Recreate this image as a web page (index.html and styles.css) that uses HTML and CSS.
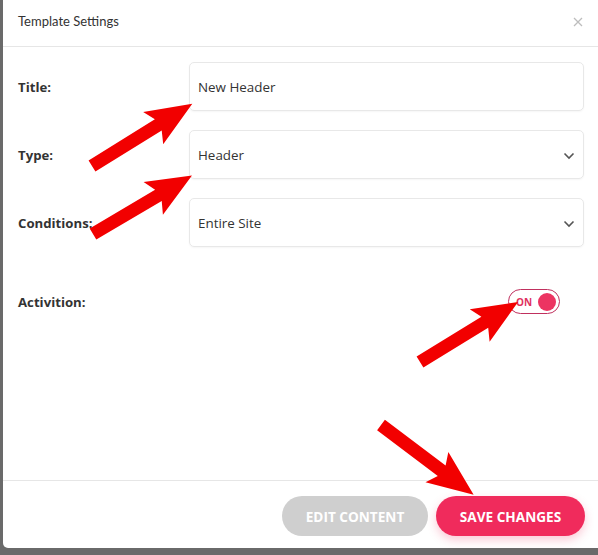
FILE: index.html
```html
<!DOCTYPE html>
<html>
<head>
<meta charset="utf-8">
<link rel="stylesheet" href="styles.css">
</head>
<body>
<div class="modal">
  <div class="modal-header">
    <span class="modal-title">Template Settings</span>
    <svg class="close" width="10" height="10" viewBox="0 0 10 10"><path d="M1 1L9 9M9 1L1 9" stroke="#bdbdbd" stroke-width="1.3" fill="none"/></svg>
  </div>
  <div class="modal-body">
    <div class="row">
      <label class="label">Title:</label>
      <div class="field">New Header</div>
    </div>
    <div class="row">
      <label class="label">Type:</label>
      <div class="field">Header
        <svg class="chev" width="12" height="8" viewBox="0 0 12 8"><path d="M1.5 1.5L6 6L10.5 1.5" stroke="#555" stroke-width="1.6" fill="none"/></svg>
      </div>
    </div>
    <div class="row">
      <label class="label">Conditions:</label>
      <div class="field">Entire Site
        <svg class="chev" width="12" height="8" viewBox="0 0 12 8"><path d="M1.5 1.5L6 6L10.5 1.5" stroke="#555" stroke-width="1.6" fill="none"/></svg>
      </div>
    </div>
    <div class="row toggle-row">
      <label class="label">Activition:</label>
      <div class="toggle"><span class="toggle-text">ON</span><span class="knob"></span></div>
    </div>
  </div>
  <div class="modal-footer">
    <button class="btn btn-grey">EDIT CONTENT</button>
    <button class="btn btn-red">SAVE CHANGES</button>
  </div>
  <svg class="arrows" width="598" height="555" viewBox="0 0 598 555">
    <g fill="#f20000">
      <polygon transform="translate(92,166) rotate(-31.8)" points="0,-6.5 78,-6.5 72,-19 118,0 72,19 78,6.5 0,6.5"/>
      <polygon transform="translate(93,234) rotate(-30.6)" points="0,-6.5 76,-6.5 70,-19 115,0 70,19 76,6.5 0,6.5"/>
      <polygon transform="translate(420,362) rotate(-31.5)" points="0,-6.5 76,-6.5 70,-19 115,0 70,19 76,6.5 0,6.5"/>
      <polygon transform="translate(381,425) rotate(37)" points="0,-6.5 76,-6.5 70,-19 116,0 70,19 76,6.5 0,6.5"/>
    </g>
  </svg>
</div>
</body>
</html>
```

FILE: styles.css
```css
html, body {
  margin: 0;
  padding: 0;
}
body {
  background: #6a6a6a;
  width: 598px;
  height: 555px;
  overflow: hidden;
  font-family: "Open Sans", "Noto Sans", sans-serif;
  color: #333;
}
.modal {
  position: relative;
  margin-left: 3px;
  width: 595px;
  height: 548px;
  background: #fff;
  border-bottom-left-radius: 5px;
}
.modal-header {
  border-bottom: 1px solid #e6e6e6;
  display: flex;
  align-items: center;
  justify-content: space-between;
  padding: 0 15px 0 15px;
  box-sizing: border-box;
  height: 47px;
}
.modal-title {
  font-family: "Lato", "Open Sans", sans-serif;
  font-size: 13px;
  color: #333;
  margin-top: -4px;
}
.close {
  margin-top: -3px;
}
.modal-body {
  padding: 15px 14px 0 15px;
  height: 434px;
  box-sizing: border-box;
  border-bottom: 1px solid #e6e6e6;
}
.row {
  display: flex;
  align-items: center;
  margin-bottom: 19px;
}
.label {
  width: 171px;
  font-size: 13.2px;
  font-weight: 700;
  color: #333;
}
.field {
  position: relative;
  flex: 0 0 395px;
  height: 49px;
  box-sizing: border-box;
  border: 1px solid #e8e8e8;
  border-radius: 5px;
  box-shadow: 0 1px 2px rgba(0,0,0,0.04);
  display: flex;
  align-items: center;
  padding-left: 8px;
  font-size: 13.4px;
  color: #333;
}
.chev {
  position: absolute;
  right: 8px;
  top: 21px;
}
.toggle-row {
  margin-top: 42px;
  justify-content: space-between;
  padding-right: 24px;
}
.toggle {
  width: 52px;
  height: 25px;
  box-sizing: border-box;
  border: 1.5px solid #c0305e;
  border-radius: 13px;
  display: flex;
  align-items: center;
  justify-content: space-between;
  padding: 0 3px 0 7px;
}
.toggle-text {
  font-size: 10px;
  font-weight: 700;
  color: #e0305e;
}
.knob {
  width: 18px;
  height: 18px;
  border-radius: 50%;
  background: #ec3462;
}
.modal-footer {
  display: flex;
  justify-content: flex-end;
  gap: 8px;
  padding: 15px 13px 0 0;
}
.btn {
  height: 40px;
  border: none;
  border-radius: 20px;
  font-family: "Open Sans", "Noto Sans", sans-serif;
  font-size: 13.6px;
  font-weight: 700;
  color: #fff;
  padding: 0;
}
.btn-grey {
  width: 146px;
  background: #cfcfcf;
}
.btn-red {
  width: 149px;
  background: #f02b5c;
  box-shadow: 0 4px 10px rgba(240,43,92,0.25);
}
.arrows {
  position: absolute;
  left: -3px;
  top: 0;
  pointer-events: none;
}
```
